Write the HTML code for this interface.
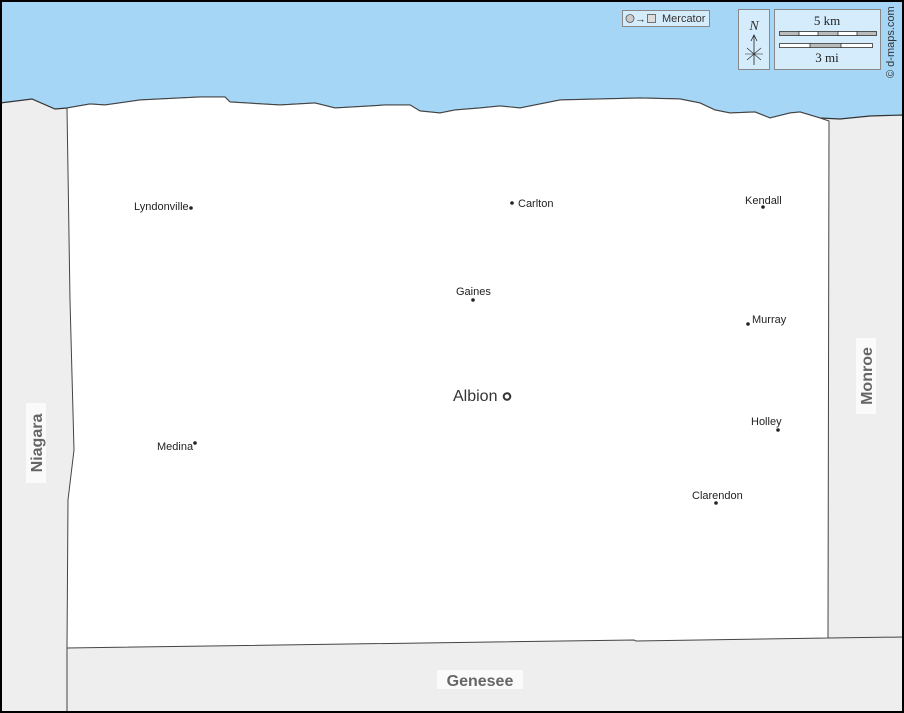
<!DOCTYPE html>
<html><head><meta charset="utf-8"><style>
html,body{margin:0;padding:0;width:904px;height:713px;overflow:hidden;background:#fff}
svg{display:block}
text{font-family:"Liberation Sans",sans-serif}
</style></head><body>
<svg width="904" height="713" viewBox="0 0 904 713" xmlns="http://www.w3.org/2000/svg">
<rect x="0" y="0" width="904" height="713" fill="#a5d6f5"/>
<path d="M0,103 L32,99 L55,109 L67,108 L90,104 L105,105 L140,100 L200,97 L225,97 L230,102 L280,105 L315,103 L335,108 L370,106 L385,105 L410,105 L420,111 L440,113 L455,110 L480,108 L500,106 L520,108 L540,104 L560,100 L600,99 L640,98 L680,99 L700,103 L715,110 L730,113 L755,112 L770,118 L790,113 L800,112 L820,118 L840,119 L870,116 L904,115 L904,713 L0,713 Z" fill="#eeeeee" stroke="#333" stroke-width="1.2"/>
<path d="M67,108 L90,104 L105,105 L140,100 L200,97 L225,97 L230,102 L280,105 L315,103 L335,108 L370,106 L385,105 L410,105 L420,111 L440,113 L455,110 L480,108 L500,106 L520,108 L540,104 L560,100 L600,99 L640,98 L680,99 L700,103 L715,110 L730,113 L755,112 L770,118 L790,113 L800,112 L820,118 L829,121 L828,638 L636,641 L634,640 L67,648 L68,500 L74,450 L70,300 L67,108 Z" fill="#fff" stroke="#444" stroke-width="1"/>
<line x1="67" y1="648" x2="67" y2="713" stroke="#444" stroke-width="1"/>
<line x1="828" y1="638" x2="904" y2="637" stroke="#444" stroke-width="1"/>
<rect x="1" y="1" width="902" height="711" fill="none" stroke="#000" stroke-width="2"/>
<rect x="622.5" y="10.5" width="87" height="16" fill="#d4ecfb" stroke="#888"/>
<circle cx="630" cy="18.5" r="4" fill="#ccc" stroke="#555" stroke-width="0.8"/>
<text x="635" y="22.5" font-size="11" fill="#333">→</text>
<rect x="647.5" y="14.5" width="8" height="8" fill="#ddd" stroke="#555" stroke-width="0.8"/>
<text x="662" y="22" font-size="11" fill="#333">Mercator</text>
<rect x="738.5" y="9.5" width="31" height="60" fill="#d4ecfb" stroke="#888"/>
<text x="754" y="30" font-size="14" font-style="italic" text-anchor="middle" fill="#333" style="font-family:'Liberation Serif',serif">N</text>
<line x1="754" y1="36" x2="754" y2="65" stroke="#222" stroke-width="0.8"/>
<path d="M751,41 L754,35 L757,41" fill="none" stroke="#222" stroke-width="0.8"/>
<line x1="745" y1="54" x2="763" y2="54" stroke="#222" stroke-width="0.6"/>
<line x1="747" y1="48" x2="761" y2="60" stroke="#222" stroke-width="0.6"/>
<line x1="761" y1="48" x2="747" y2="60" stroke="#222" stroke-width="0.6"/>
<rect x="774.5" y="9.5" width="106" height="60" fill="#d4ecfb" stroke="#888"/>
<text x="827" y="25" font-size="13" text-anchor="middle" fill="#222" style="font-family:'Liberation Serif',serif">5 km</text>
<rect x="779.5" y="31.5" width="97" height="4" fill="#bbb" stroke="#333" stroke-width="0.8"/>
<rect x="799" y="32" width="19" height="3" fill="#fff"/><rect x="838" y="32" width="19" height="3" fill="#fff"/>
<line x1="799" y1="31" x2="799" y2="36" stroke="#333" stroke-width="0.8"/><line x1="818" y1="31" x2="818" y2="36" stroke="#333" stroke-width="0.8"/><line x1="838" y1="31" x2="838" y2="36" stroke="#333" stroke-width="0.8"/><line x1="857" y1="31" x2="857" y2="36" stroke="#333" stroke-width="0.8"/>
<rect x="779.5" y="43.5" width="93" height="4" fill="#fff" stroke="#333" stroke-width="0.8"/>
<rect x="810" y="44" width="31" height="3" fill="#bbb"/>
<line x1="810" y1="43" x2="810" y2="48" stroke="#333" stroke-width="0.8"/><line x1="841" y1="43" x2="841" y2="48" stroke="#333" stroke-width="0.8"/>
<text x="827" y="62" font-size="13" text-anchor="middle" fill="#222" style="font-family:'Liberation Serif',serif">3 mi</text>
<text transform="translate(894,78) rotate(-90)" font-size="11" fill="#333">© d-maps.com</text>
<rect x="437" y="670" width="86" height="19" fill="#fafafa"/>
<text x="480" y="686" font-size="16" font-weight="bold" text-anchor="middle" fill="#666">Genesee</text>
<rect x="26" y="403" width="20" height="80" fill="#fafafa"/>
<text transform="translate(42,443) rotate(-90)" font-size="16" font-weight="bold" text-anchor="middle" fill="#666">Niagara</text>
<rect x="856" y="338" width="20" height="76" fill="#fafafa"/>
<text transform="translate(872,376) rotate(-90)" font-size="16" font-weight="bold" text-anchor="middle" fill="#666">Monroe</text>
<g font-size="11" fill="#222">
<text x="134" y="210">Lyndonville</text><circle cx="191" cy="208" r="1.8" fill="#222"/>
<circle cx="512" cy="203" r="1.8" fill="#222"/><text x="518" y="207">Carlton</text>
<text x="745" y="204">Kendall</text><circle cx="763" cy="207" r="1.8" fill="#222"/>
<text x="456" y="295">Gaines</text><circle cx="473" cy="300" r="1.8" fill="#222"/>
<circle cx="748" cy="324" r="1.8" fill="#222"/><text x="752" y="323">Murray</text>
<text x="751" y="425">Holley</text><circle cx="778" cy="430" r="1.8" fill="#222"/>
<text x="157" y="450">Medina</text><circle cx="195" cy="443" r="1.8" fill="#222"/>
<text x="692" y="499">Clarendon</text><circle cx="716" cy="503" r="1.8" fill="#222"/>
</g>
<text x="453" y="401" font-size="16" fill="#333">Albion</text>
<circle cx="507" cy="396.5" r="3.3" fill="none" stroke="#333" stroke-width="2"/>
</svg>
</body></html>
